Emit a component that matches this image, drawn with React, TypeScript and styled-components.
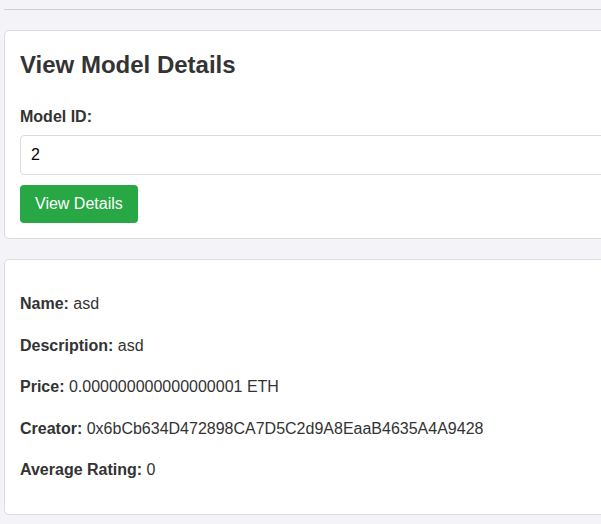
import React from "react";
import styled, { createGlobalStyle } from "styled-components";

const GlobalStyle = createGlobalStyle`
  html, body {
    margin: 0;
    padding: 0;
    background: #f4f4f8;
    overflow: hidden;
  }
  body {
    font-family: "Liberation Sans", Arial, sans-serif;
    color: #333;
    line-height: 1.6;
  }
`;

const Page = styled.div`
  width: 760px;
  padding-left: 4px;
`;

const Divider = styled.div`
  margin-top: 9px;
  height: 1px;
  background: #cfcfd4;
  margin-bottom: 20px;
`;

const Card = styled.section`
  background: #fff;
  border: 1px solid #dcdcdf;
  border-radius: 5px;
  padding: 15px;
  margin-bottom: 20px;
`;

const Title = styled.h2`
  margin: 0 0 20px;
  font-size: 24px;
  font-weight: bold;
  color: #333;
`;

const Label = styled.label`
  display: block;
  font-weight: bold;
  font-size: 16px;
  margin-bottom: 5px;
`;

const Input = styled.input`
  display: block;
  box-sizing: border-box;
  width: 100%;
  height: 40px;
  padding: 10px;
  font-family: "Liberation Sans", Arial, sans-serif;
  font-size: 16px;
  color: #000;
  border: 1px solid #dcdcdc;
  border-radius: 4px;
  margin-bottom: 10px;
  outline: none;
`;

const Button = styled.button`
  display: block;
  height: 38px;
  padding: 0 15px;
  background: #28a745;
  color: #fff;
  border: none;
  border-radius: 4px;
  font-family: "Liberation Sans", Arial, sans-serif;
  font-size: 16px;
  cursor: pointer;
`;

const Detail = styled.p`
  margin: 16px 0;
  font-size: 16px;
`;

const Key = styled.strong`
  font-weight: bold;
`;

const details: [string, string][] = [
  ["Name:", "asd"],
  ["Description:", "asd"],
  ["Price:", "0.000000000000000001 ETH"],
  ["Creator:", "0x6bCb634D472898CA7D5C2d9A8EaaB4635A4A9428"],
  ["Average Rating:", "0"],
];

export default function App() {
  return (
    <>
      <GlobalStyle />
      <Page>
        <Divider />
        <Card>
          <Title>View Model Details</Title>
          <Label htmlFor="model-id">Model ID:</Label>
          <Input id="model-id" defaultValue="2" />
          <Button>View Details</Button>
        </Card>
        <Card>
          {details.map(([k, v]) => (
            <Detail key={k}>
              <Key>{k}</Key> {v}
            </Detail>
          ))}
        </Card>
      </Page>
    </>
  );
}
